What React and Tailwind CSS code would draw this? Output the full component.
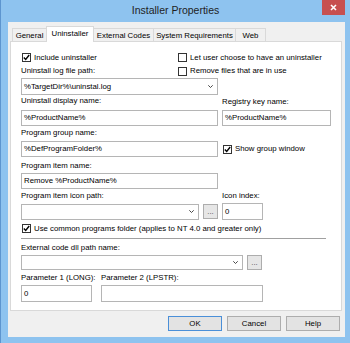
import React from "react";

const Check = ({ checked }) => (
  <span className="w-[9px] h-[9px] border border-[#333] bg-white flex items-center justify-center shrink-0">
    {checked && (
      <svg width="7" height="7" viewBox="0 0 7 7">
        <path d="M0.8 3.4 L2.7 5.4 L6.2 1" stroke="#000" strokeWidth="1.4" fill="none" />
      </svg>
    )}
  </span>
);

const CheckRow = ({ checked, children, className = "" }) => (
  <div className={`flex items-center gap-[3px] ${className}`}>
    <Check checked={checked} />
    <span className="whitespace-nowrap leading-[10px]">{children}</span>
  </div>
);

const Label = ({ children, className = "" }) => (
  <div className={`h-[10px] leading-[10px] whitespace-nowrap ${className}`}>{children}</div>
);

const Input = ({ value, className = "" }) => (
  <div className={`border border-[#b5b5b5] bg-white flex items-center pl-[2px] whitespace-nowrap ${className}`}>
    {value}
  </div>
);

const Combo = ({ value, className = "" }) => (
  <div className={`border border-[#b5b5b5] bg-white flex items-center justify-between pl-[2px] pr-[4px] ${className}`}>
    <span className="whitespace-nowrap">{value}</span>
    <svg width="5" height="3" viewBox="0 0 5 3">
      <path d="M0.3 0.3 L2.5 2.5 L4.7 0.3" stroke="#333" strokeWidth="0.9" fill="none" />
    </svg>
  </div>
);

const Dots = ({ className = "" }) => (
  <div className={`w-[15px] h-[15px] border border-[#adadad] bg-[#e6e6e6] flex items-end justify-center pb-[3px] leading-[6px] text-[#444] ${className}`}>
    ...
  </div>
);

const Tab = ({ label, selected, className = "" }) =>
  selected ? (
    <div className={`relative z-10 -mb-px h-[16px] bg-white border border-b-0 border-[#d9d9d9] flex justify-center pt-[2px] leading-[10px] ${className}`}>
      {label}
    </div>
  ) : (
    <div className={`h-[13px] bg-[#f0f0f0] border border-b-0 border-[#d9d9d9] flex justify-center pt-[2px] leading-[10px] ${className}`}>
      {label}
    </div>
  );

const Button = ({ label, primary }) => (
  <div
    className={`w-[54px] h-[15px] flex items-center justify-center bg-[#e3e3e3] border ${
      primary ? "border-[#4a8fd8]" : "border-[#adadad]"
    }`}
  >
    {label}
  </div>
);

export default function App() {
  return (
    <div
      className="w-[350px] h-[343px] bg-[#8ec3ef] border-l border-[#5d95cf] flex flex-col text-[7.8px] text-black"
      style={{ fontFamily: '"Liberation Sans", Arial, sans-serif' }}
    >
      <div className="relative h-[22px] flex items-center justify-center text-[10.5px] text-[#1e1e1e]">
        Installer Properties
        <div className="absolute top-0 right-[5px] w-[23px] h-[15px] bg-[#c75050] flex items-center justify-center">
          <svg width="7" height="7" viewBox="0 0 7 7">
            <path d="M1 1 L6 6 M6 1 L1 6" stroke="#fff" strokeWidth="1.6" />
          </svg>
        </div>
      </div>

      <div className="ml-[7px] mr-[5px] h-[315px] bg-[#f0f0f0] flex flex-col">
        <div className="mt-[5px] ml-[4px] h-[14px] flex items-end">
          <Tab label="General" className="w-[35px]" />
          <Tab label="Uninstaller" selected className="w-[48px] -ml-[1px]" />
          <Tab label="External Codes" className="w-[61px] -ml-[1px]" />
          <Tab label="System Requirements" className="w-[83px] -ml-[1px]" />
          <Tab label="Web" className="w-[31px] -ml-[1px]" />
        </div>

        <div className="ml-[2px] w-[332px] h-[270px] bg-white border border-[#d9d9d9] flex flex-col pl-[10px]">
          <div className="mt-[11px] h-[9px] flex items-center">
            <div className="w-[157px] pl-[1px]">
              <CheckRow checked>Include uninstaller</CheckRow>
            </div>
            <CheckRow>Let user choose to have an uninstaller</CheckRow>
          </div>

          <div className="mt-[4px] h-[10px] flex items-center">
            <Label className="w-[157px]">Uninstall log file path:</Label>
            <CheckRow>Remove files that are in use</CheckRow>
          </div>

          <Combo value="%TargetDir%\uninstal.log" className="mt-[2px] w-[197px] h-[17px]" />

          <div className="mt-[1px] flex">
            <Label className="w-[201px]">Uninstall display name:</Label>
            <Label className="mt-[1px]">Registry key name:</Label>
          </div>

          <div className="mt-[3px] flex gap-[4px]">
            <Input value="%ProductName%" className="w-[197px] h-[16px]" />
            <Input value="%ProductName%" className="w-[109px] h-[16px]" />
          </div>

          <Label className="mt-[2px]">Program group name:</Label>

          <div className="mt-[3px] flex items-center">
            <Input value="%DefProgramFolder%" className="w-[197px] h-[16px]" />
            <CheckRow checked className="ml-[5px]">Show group window</CheckRow>
          </div>

          <Label className="mt-[4px]">Program item name:</Label>

          <Input value="Remove %ProductName%" className="mt-[2px] w-[197px] h-[16px]" />

          <div className="mt-[2px] flex">
            <Label className="w-[201px]">Program item icon path:</Label>
            <Label>Icon index:</Label>
          </div>

          <div className="mt-[2px] flex items-center">
            <Combo className="w-[178px] h-[16px]" />
            <Dots className="ml-[4px]" />
            <Input value="0" className="ml-[4px] w-[41px] h-[17px]" />
          </div>

          <CheckRow checked className="mt-[4px] h-[9px] pl-[1px]">
            Use common programs folder (applies to NT 4.0 and greater only)
          </CheckRow>

          <div className="mt-[5px] w-[305px] border-t border-[#a0a0a0] border-b border-b-white" />

          <Label className="mt-[3px]">External code dll path name:</Label>

          <div className="mt-[2px] flex items-center">
            <Combo className="w-[222px] h-[15px]" />
            <Dots className="ml-[4px]" />
          </div>

          <div className="mt-[3px] flex">
            <Label className="w-[80px]">Parameter 1 (LONG):</Label>
            <Label>Parameter 2 (LPSTR):</Label>
          </div>

          <div className="mt-[2px] flex">
            <Input value="0" className="w-[71px] h-[17px]" />
            <Input className="ml-[9px] w-[162px] h-[17px]" />
          </div>
        </div>

        <div className="mt-[5px] flex justify-end gap-[5px] pr-[5px]">
          <Button label="OK" primary />
          <Button label="Cancel" />
          <Button label="Help" />
        </div>
      </div>
    </div>
  );
}
